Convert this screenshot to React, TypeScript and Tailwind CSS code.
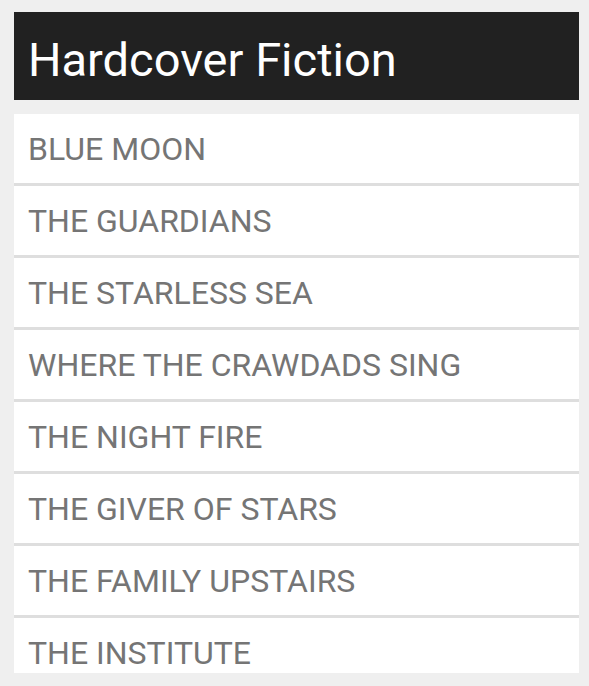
const books = [
  "BLUE MOON",
  "THE GUARDIANS",
  "THE STARLESS SEA",
  "WHERE THE CRAWDADS SING",
  "THE NIGHT FIRE",
  "THE GIVER OF STARS",
  "THE FAMILY UPSTAIRS",
  "THE INSTITUTE",
];

export default function App() {
  return (
    <div className="h-[686px] w-[589px] bg-[#efefef] pl-[14px] pr-[10px] pt-[12px] pb-[13px] flex flex-col gap-[14px] font-['Roboto',sans-serif] overflow-hidden">
      <div className="h-[88px] shrink-0 bg-[#212121] flex items-center px-[14px] pt-[6px]">
        <h1 className="text-[47px] leading-none text-white">Hardcover Fiction</h1>
      </div>
      <ul className="flex-1 overflow-hidden">
        {books.map((title) => (
          <li
            key={title}
            className="h-[72px] bg-white border-b-[3px] border-[#dedede] flex items-center px-[14px]"
          >
            <span className="text-[32px] leading-none text-[#757575]">{title}</span>
          </li>
        ))}
      </ul>
    </div>
  );
}
